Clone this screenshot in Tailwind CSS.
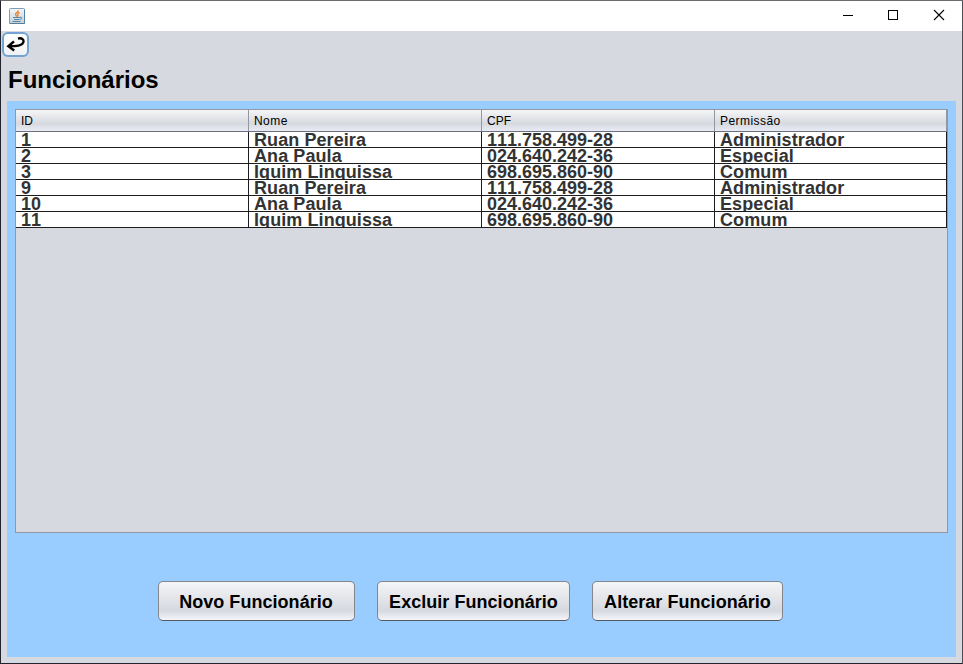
<!DOCTYPE html>
<html lang="pt-BR">
<head>
<meta charset="utf-8">
<title>Funcionários</title>
<script src="https://cdn.jsdelivr.net/npm/@tailwindcss/browser@4"></script>
</head>
<body class="h-[664px] w-[963px] overflow-hidden font-['Liberation_Sans',Arial,sans-serif] text-black [font-kerning:none]">
<div class="flex h-[664px] w-[963px] flex-col border border-[#22232c] border-t-[#6d6d6f] border-r-[#4c4d52] bg-[#d6d9df]">
  <header class="flex h-[30px] shrink-0 items-center justify-between bg-white pl-2">
    <svg class="mb-px" width="16" height="16" viewBox="0 0 16 16" fill="none">
      <defs><linearGradient id="java" x1="0" y1="0" x2="0" y2="1"><stop stop-color="#f4f7f9"/><stop offset="1" stop-color="#c3d0da"/></linearGradient></defs>
      <rect x=".5" y=".5" width="15" height="15" rx="1" fill="url(#java)" stroke="#7e9db5"/>
      <path d="M.5 15.500h15v-14" stroke="#557d9c"/>
      <path d="M9.200 2.300C9.600 4.200 6.300 4.600 6.500 6.300C6.600 7.400 7.500 7.700 7.800 8.600M10.600 4.700C8.700 5.300 8.400 6 8.900 7C9.200 7.700 8.800 8.200 8.500 8.600" stroke="#ed7d22" stroke-width="1.300"/>
      <path d="M4 9.500H11M5 11.500H10.500M3.500 13.500H11.500M11 9.300C13.500 8.600 13.300 11 10.800 11.500" stroke="#5584a5"/>
    </svg>
    <div class="flex">
      <svg width="46" height="30" viewBox="0 0 46 30"><path d="M19 14.500h10" stroke="#000"/></svg>
      <svg width="46" height="30" viewBox="0 0 46 30"><rect x="18.500" y="9.500" width="9" height="9" fill="none" stroke="#000"/></svg>
      <svg width="46" height="30" viewBox="0 0 46 30"><path d="M18 9l10 10M28 9l-10 10" stroke="#000" stroke-width="1.100"/></svg>
    </div>
  </header>
  <main class="flex grow flex-col px-1.5 pb-1.5">
    <div class="-ml-[5px] mt-px h-[25px] w-[27px] rounded-[6px] bg-[#73a4d1] p-[2px]">
      <button class="flex h-[21px] w-[23px] items-center justify-center rounded-[4px] bg-linear-to-b from-white to-[#f0f1f4]">
        <svg width="19" height="17" viewBox="0 0 19 17" fill="none" stroke="#000"><path d="M12 2.600C16 1.300 18.300 4 17.200 6.600C15.900 9.700 11 10.200 3 10.200" stroke-width="2.300"/><path d="M8 5.400L2.400 10.200L8.200 14.600" stroke-width="2.500"/></svg>
      </button>
    </div>
    <h1 class="flex h-[44px] items-center pt-0.5 pl-px text-2xl/7 font-bold">Funcionários</h1>
    <section class="flex h-[556px] flex-col bg-[#99ccff] px-2 pt-2">
      <div class="h-[424px] border border-[#9297a1] bg-[#d6d9df]">
        <div class="grid h-[22px] grid-cols-[233px_233px_233px_232px] border-b border-[#6a7080] bg-linear-to-b from-[#f5f6f7] via-[#d6d9df] via-65% to-[#e9ecf5] text-xs/[22px] tracking-[0.45px]">
          <div class="h-[21px] border-r border-[#9297a1] pl-[5px] tracking-normal">ID</div>
          <div class="h-[21px] border-r border-[#9297a1] pl-[5px]">Nome</div>
          <div class="h-[21px] border-r border-[#9297a1] pl-[5px] tracking-normal">CPF</div>
          <div class="h-[21px] border-r border-[#9297a1] pl-[5px]">Permissão</div>
        </div>
        <div id="rows" class="text-lg/[16px] font-bold text-[#333333]"></div>
      </div>
      <div class="mt-12 flex gap-[22px] pl-[143px]">
        <button class="h-10 w-[197px] rounded-[5px] border border-[#83868c] border-b-[#565960] bg-linear-to-b from-[#f4f5f7] via-[#d6d9df] via-75% to-[#f4f5fb] pt-px pr-px text-lg font-bold tracking-[0.04px]">Novo Funcionário</button>
        <button class="h-10 w-[193px] rounded-[5px] border border-[#83868c] border-b-[#565960] bg-linear-to-b from-[#f4f5f7] via-[#d6d9df] via-75% to-[#f4f5fb] pt-px text-lg font-bold tracking-[0.04px] whitespace-nowrap">Excluir Funcionário</button>
        <button class="h-10 w-[191px] rounded-[5px] border border-[#83868c] border-b-[#565960] bg-linear-to-b from-[#f4f5f7] via-[#d6d9df] via-75% to-[#f4f5fb] pt-px text-lg font-bold tracking-[0.04px] whitespace-nowrap">Alterar Funcionário</button>
      </div>
    </section>
  </main>
</div>
<script>
  const people = [
    ["1", "Ruan Pereira", "111.758.499-28", "Administrador"],
    ["2", "Ana Paula", "024.640.242-36", "Especial"],
    ["3", "Iquim Linquissa", "698.695.860-90", "Comum"],
    ["9", "Ruan Pereira", "111.758.499-28", "Administrador"],
    ["10", "Ana Paula", "024.640.242-36", "Especial"],
    ["11", "Iquim Linquissa", "698.695.860-90", "Comum"]
  ];
  const spacing = ["tracking-normal", "tracking-[0.08px]", "tracking-normal", "tracking-[0.1px]"];
  document.getElementById("rows").innerHTML = people.map(p =>
    '<div class="grid h-4 grid-cols-[233px_233px_233px_232px] bg-white">' +
    p.map((c, i) => '<div class="h-4 overflow-hidden border-r border-b border-[#1c1c1c] pl-[5px] ' + spacing[i] + '">' + c + '</div>').join("") +
    '</div>').join("");
</script>
</body>
</html>
